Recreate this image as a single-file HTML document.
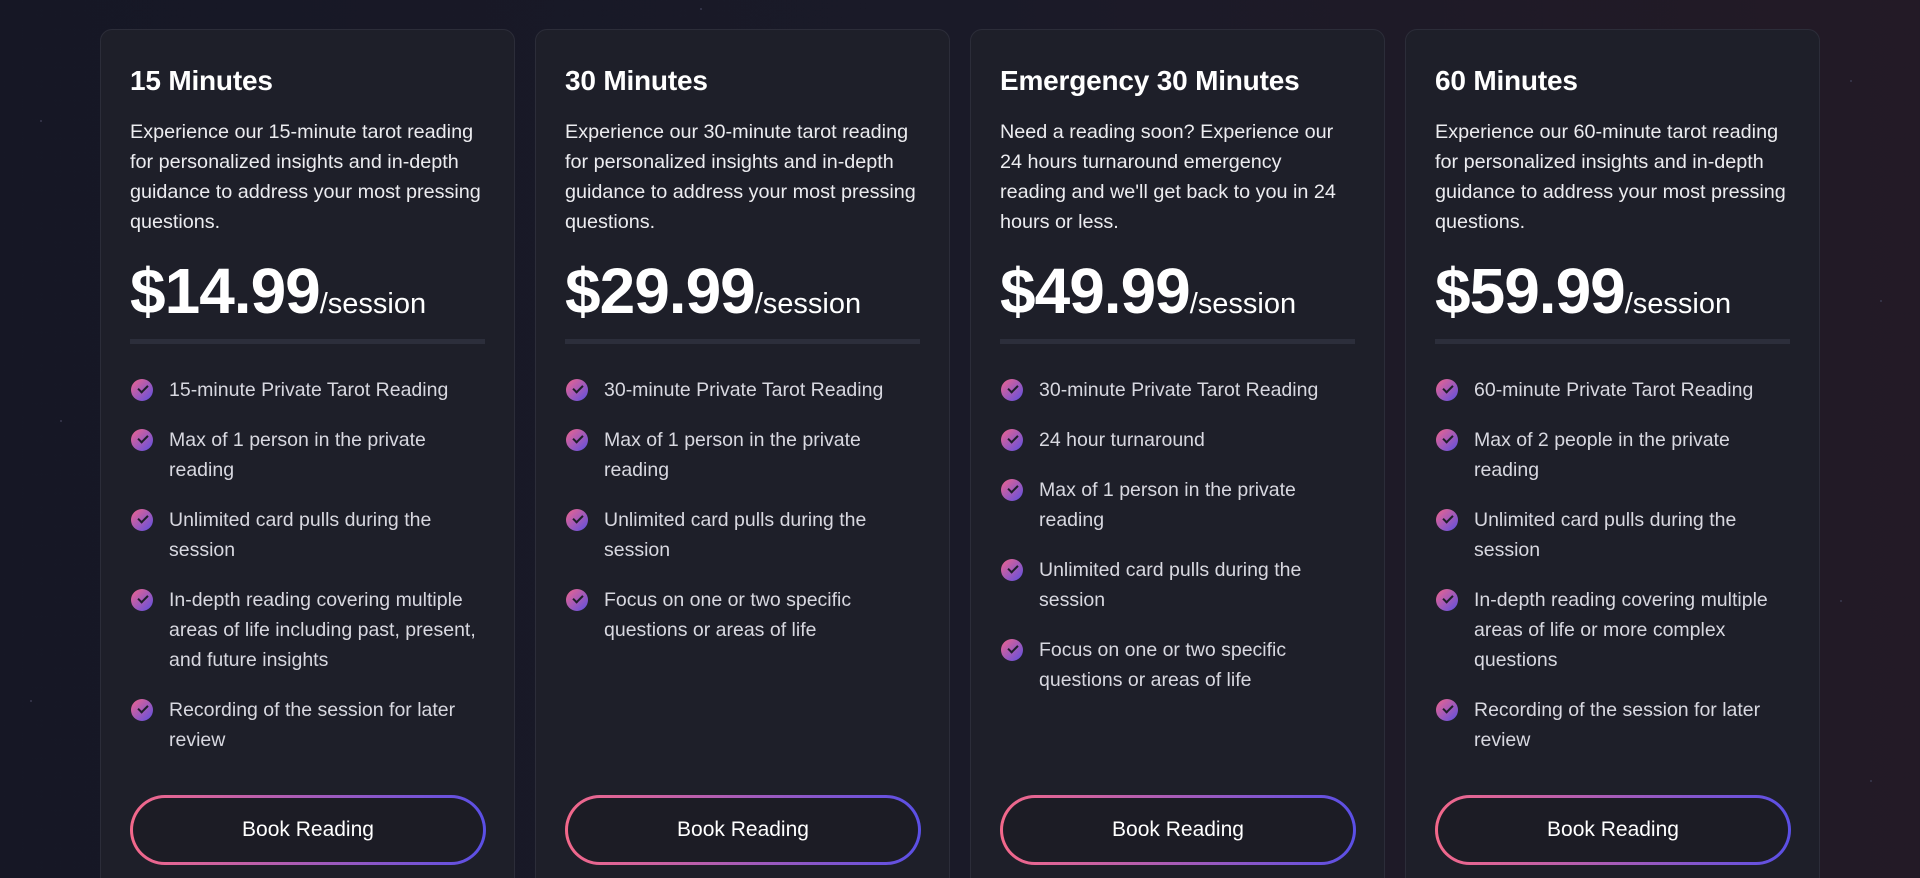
<!DOCTYPE html>
<html><head><meta charset="utf-8"><style>
*{box-sizing:border-box;margin:0;padding:0}
html,body{width:1920px;height:878px;overflow:hidden}
body{background:linear-gradient(90deg,#161725 0%,#1a1a28 50%,#231a26 100%);font-family:"Liberation Sans",sans-serif;color:#fff;position:relative}
.star{position:absolute;width:2px;height:2px;border-radius:50%;background:#3a3a50}
.card{position:absolute;top:29px;width:415px;height:880px;background:#1e1f29;border:1px solid #2c2d39;border-radius:12px;padding:0 29px}
h3{font-size:28px;font-weight:bold;margin-top:34px;line-height:34px;letter-spacing:-0.2px}
.desc{font-size:19.8px;line-height:30px;color:#ececf0;margin-top:19px;width:360px}
.price{position:absolute;top:221px;left:29px;font-size:64px;font-weight:bold;line-height:80px;letter-spacing:-1px}
.price span{font-size:29px;font-weight:normal;letter-spacing:0}
.div{position:absolute;top:309px;left:29px;width:355px;height:5px;background:#2c2e3b}
ul{position:absolute;top:345px;left:29px;width:360px;list-style:none}
li{position:relative;padding-left:39px;font-size:19.5px;line-height:30px;color:#d8d8e0;margin-bottom:20px}
li:before{content:"";position:absolute;left:1px;top:4px;width:22px;height:22px;border-radius:50%;background:linear-gradient(135deg,#f0658c,#5b4fe2)}
li:after{content:"";position:absolute;left:8px;top:10px;width:8px;height:4px;border-left:2.5px solid #1e1f29;border-bottom:2.5px solid #1e1f29;transform:rotate(-45deg)}
.btn{position:absolute;top:765px;left:29px;width:356px;height:70px;border-radius:35px;padding:3px;background:linear-gradient(90deg,#f3688a,#5a4fe6)}
.btn div{width:100%;height:100%;border-radius:32px;background:#1c1c25;display:flex;align-items:center;justify-content:center;font-size:21px;color:#fff}
</style></head><body>
<div class="star" style="left:40px;top:120px"></div><div class="star" style="left:60px;top:420px"></div><div class="star" style="left:30px;top:700px"></div><div class="star" style="left:1850px;top:80px"></div><div class="star" style="left:1880px;top:300px"></div><div class="star" style="left:1840px;top:600px"></div><div class="star" style="left:1870px;top:780px"></div><div class="star" style="left:700px;top:8px"></div>

<div class="card" style="left:100px">
<h3>15 Minutes</h3>
<p class="desc">Experience our 15-minute tarot reading for personalized insights and in-depth guidance to address your most pressing questions.</p>
<div class="price">$14.99<span>/session</span></div><div class="div"></div>
<ul><li>15-minute Private Tarot Reading</li><li>Max of 1 person in the private reading</li><li>Unlimited card pulls during the session</li><li>In-depth reading covering multiple areas of life including past, present, and future insights</li><li>Recording of the session for later review</li></ul>
<div class="btn"><div>Book Reading</div></div></div>

<div class="card" style="left:535px">
<h3>30 Minutes</h3>
<p class="desc">Experience our 30-minute tarot reading for personalized insights and in-depth guidance to address your most pressing questions.</p>
<div class="price">$29.99<span>/session</span></div><div class="div"></div>
<ul><li>30-minute Private Tarot Reading</li><li>Max of 1 person in the private reading</li><li>Unlimited card pulls during the session</li><li>Focus on one or two specific questions or areas of life</li></ul>
<div class="btn"><div>Book Reading</div></div></div>

<div class="card" style="left:970px">
<h3>Emergency 30 Minutes</h3>
<p class="desc">Need a reading soon? Experience our 24 hours turnaround emergency<br>reading and we'll get back to you in 24 hours or less.</p>
<div class="price">$49.99<span>/session</span></div><div class="div"></div>
<ul><li>30-minute Private Tarot Reading</li><li>24 hour turnaround</li><li>Max of 1 person in the private reading</li><li>Unlimited card pulls during the session</li><li>Focus on one or two specific questions or areas of life</li></ul>
<div class="btn"><div>Book Reading</div></div></div>

<div class="card" style="left:1405px">
<h3>60 Minutes</h3>
<p class="desc">Experience our 60-minute tarot reading for personalized insights and in-depth guidance to address your most pressing questions.</p>
<div class="price">$59.99<span>/session</span></div><div class="div"></div>
<ul><li>60-minute Private Tarot Reading</li><li>Max of 2 people in the private reading</li><li>Unlimited card pulls during the session</li><li>In-depth reading covering multiple areas of life or more complex questions</li><li>Recording of the session for later review</li></ul>
<div class="btn"><div>Book Reading</div></div></div>
</body></html>
